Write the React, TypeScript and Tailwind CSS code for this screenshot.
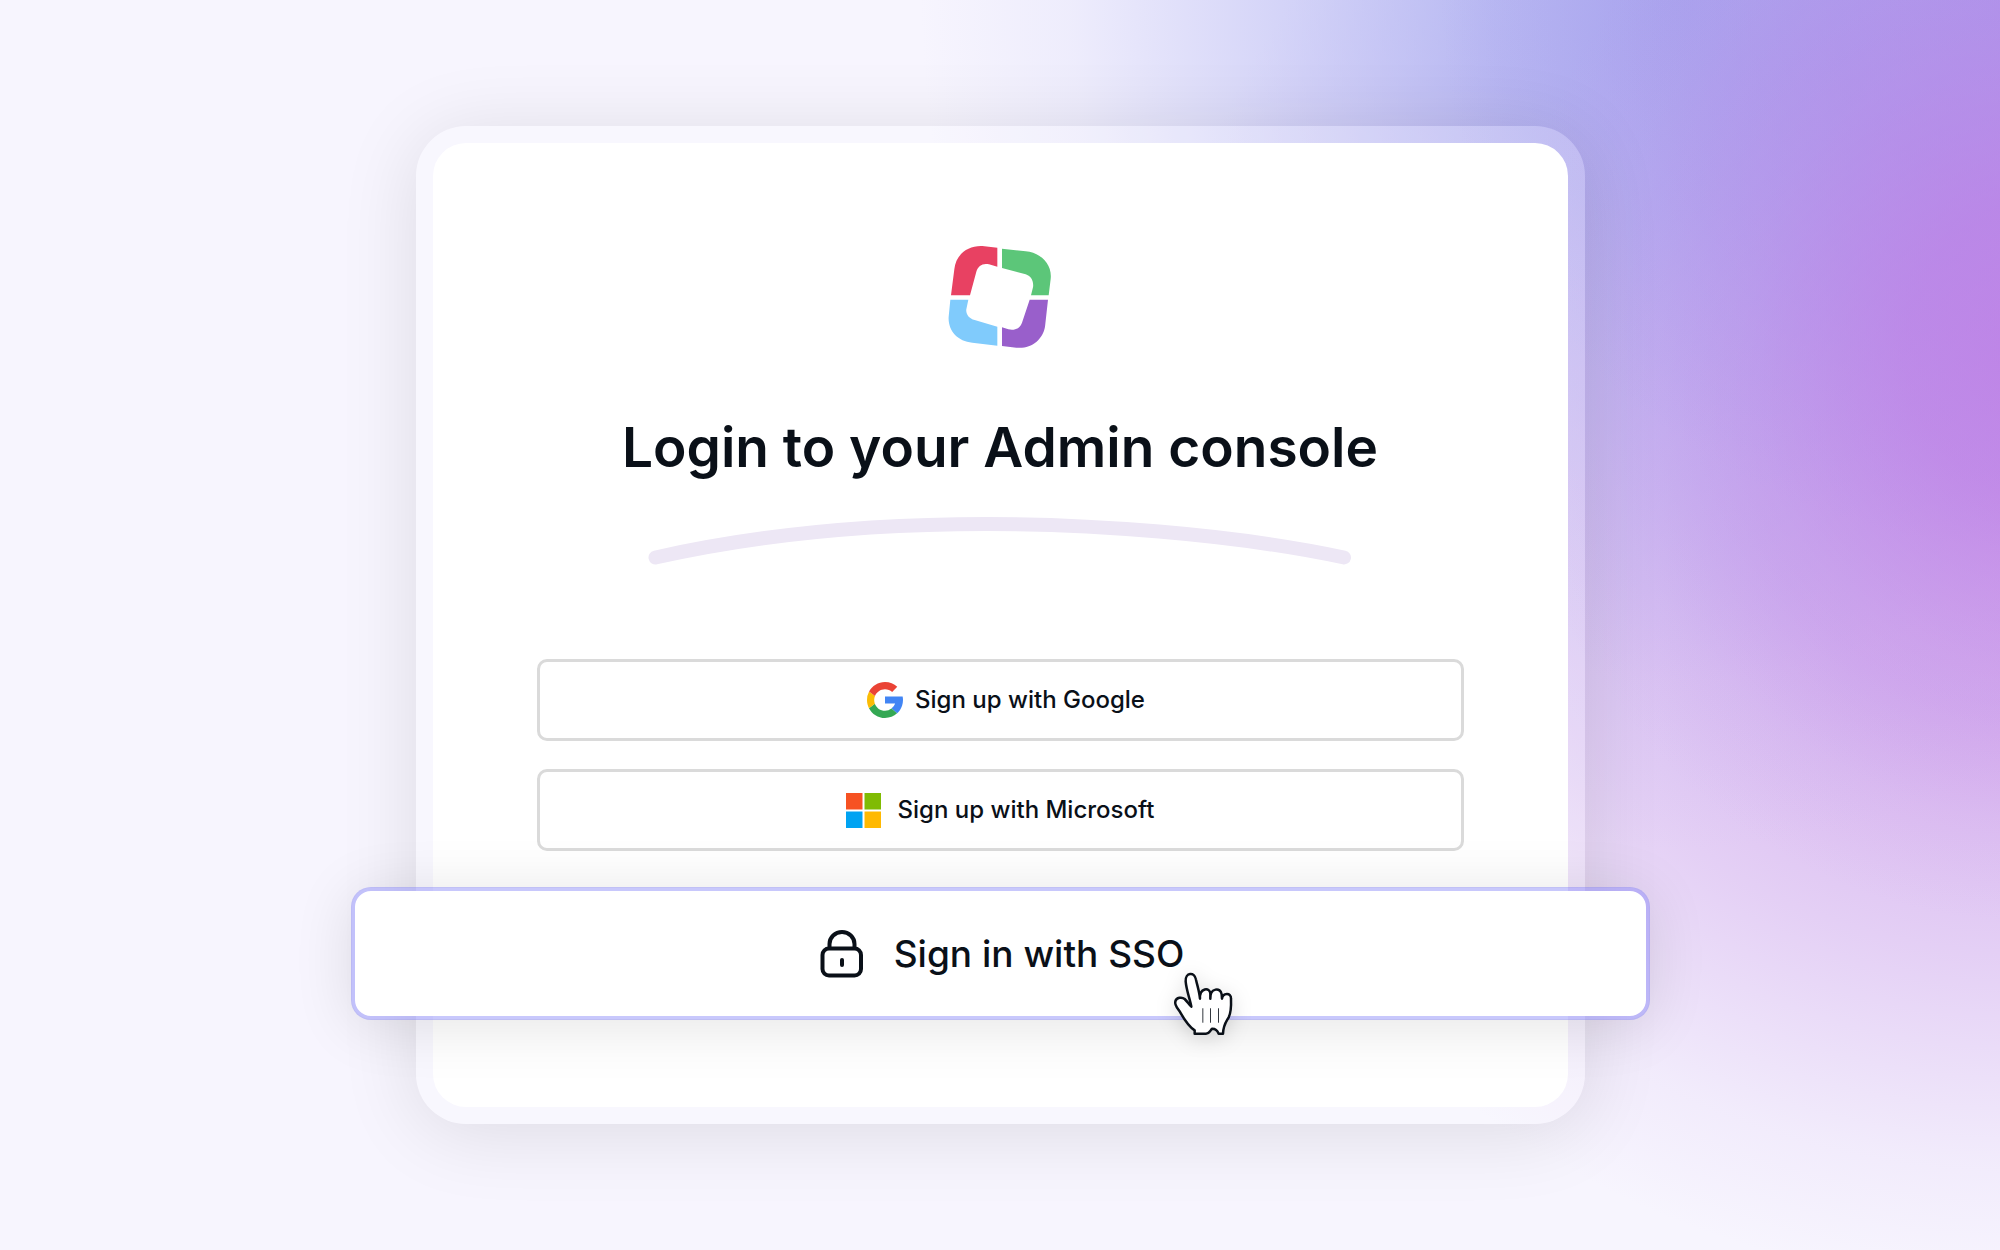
function Logo() {
  return (
    <svg viewBox="57 45 312 312" className="size-[104px]" role="img" aria-label="Company logo">
      <path fill="#e84162" d="M205 53 160 48C115 46 80 75 76 118L66 195.500H123L142 125C147 107 162 98 180 103L205 110Z" />
      <path fill="#5cc679" d="M219 56 290 64C338 69 370 104 365 147L359 195.500H306L312 172C315 152 305 138 290 133L219 114Z" />
      <path fill="#995fcb" d="M302 209.500H357L348 290C341 330 305 358 262 353L219 348V292L238 298C257 303 273 295 279 278Z" />
      <path fill="#80cbfc" d="M64 209.500H118L112 238C110 252 120 266 137 270L205 290V347L130 338C85 335 56 300 59 260Z" />
    </svg>
  );
}

function GoogleIcon() {
  return (
    <svg viewBox="4 4 40 40" className="ml-3 size-9" aria-hidden="true">
      <path fill="#4285f4" d="M43.611 20.083H24v7.917h11.303a12 12 0 0 1-4.087 5.571l6.190 5.238C36.971 39.205 44 34 44 24c0-1.341-.138-2.650-.389-3.917z" />
      <path fill="#34a853" d="M24 44c5.166 0 9.860-1.977 13.409-5.192l-6.190-5.238A11.900 11.900 0 0 1 24 36c-5.202 0-9.619-3.317-11.283-7.946l-6.522 5.025C9.505 39.556 16.227 44 24 44z" />
      <path fill="#fbbc05" d="M6.306 14.691A19.900 19.900 0 0 0 4 24c0 3.260.790 6.340 2.195 9.079l6.522-5.025A12 12 0 0 1 12.877 19.510z" />
      <path fill="#ea4335" d="m6.306 14.691 6.571 4.819C14.655 15.108 18.961 12 24 12c3.059 0 5.842 1.154 7.961 3.039l5.657-5.657C34.046 6.053 29.268 4 24 4 16.318 4 9.656 8.337 6.306 14.691z" />
    </svg>
  );
}

function MicrosoftIcon() {
  return (
    <svg viewBox="0 0 35 35" className="size-[35px]" aria-hidden="true">
      <path fill="#f65222" d="M0 0h16.500v16.500H0z" />
      <path fill="#80bb03" d="M18.500 0H35v16.500H18.500z" />
      <path fill="#00a3f2" d="M0 18.500h16.500V35H0z" />
      <path fill="#ffb902" d="M18.500 18.500H35V35H18.500z" />
    </svg>
  );
}

function LockIcon() {
  return (
    <svg viewBox="0 0 44 48" className="h-12 w-11" fill="none" stroke="#0a1018" strokeWidth="4" strokeLinecap="round" aria-hidden="true">
      <path d="M9.500 18v-4a12.500 12 0 0 1 25 0v4" />
      <rect x="2.500" y="18.500" width="38.500" height="27" rx="6.500" />
      <path d="M22 30v5" />
    </svg>
  );
}

function HandCursor() {
  return (
    <svg
      viewBox="69 65 183 192"
      className="absolute top-[38px] -right-[50px] h-16 w-[61px] overflow-visible drop-shadow-[0_4px_10px_rgba(0,0,0,0.14)]"
      strokeLinejoin="round"
      strokeLinecap="round"
      aria-hidden="true"
    >
      <path
        fill="#fff"
        stroke="#0a1018"
        strokeWidth="7.500"
        d="M124 169C120 147 109 119 107 93C105 66 134 63 138 88C143 110 148 124 150 145C148 112 180 110 181 130V145C179 112 213 110 215 132L216 145C218 127 244 126 243 145C244 171 243 187 236 201C229 214 220 223 219 250H206C202 240 193 235 187 235C181 238 180 250 168 250H134V240C112 226 100 202 89 183C81 172 73 164 76 153C79 141 96 139 104 146C113 155 117 163 124 169Z"
      />
      <path stroke="#0a1018" strokeWidth="2.500" d="M158.500 175v41M181.500 175v41M205.500 175v41" />
    </svg>
  );
}

const providerButton =
  "flex h-[82px] w-full items-center justify-center rounded-[10px] border-3 border-[#dadada] bg-white text-2xl font-medium";

export default function App() {
  return (
    <main className="flex min-h-screen items-center justify-center overflow-hidden bg-[#f7f5fe] bg-[radial-gradient(ellipse_27%_46%_at_102%_28%,rgba(191,124,229,0.8)_0%,rgba(191,124,229,0.66)_25%,rgba(194,130,230,0.33)_55%,rgba(198,145,232,0.1)_82%,rgba(198,145,232,0)_100%),radial-gradient(ellipse_30%_44%_at_102%_0%,rgba(166,146,234,0.9)_0%,rgba(166,146,234,0.65)_35%,rgba(168,150,236,0.22)_75%,rgba(168,150,236,0)_100%),radial-gradient(ellipse_38%_68%_at_84%_0%,rgba(160,164,238,0.86)_0%,rgba(164,168,239,0.73)_25%,rgba(172,174,241,0.47)_52%,rgba(185,187,243,0.15)_80%,rgba(185,187,243,0)_100%),radial-gradient(ellipse_44%_66%_at_101%_37%,rgba(196,140,230,0.74)_0%,rgba(196,142,230,0.65)_30%,rgba(200,152,232,0.4)_60%,rgba(205,170,236,0.13)_85%,rgba(205,170,236,0)_100%)] px-24 py-[126px] font-['Inter',sans-serif] text-[#0a1018]">
      <section className="w-full max-w-[1169px] rounded-[50px] bg-white/20 p-[17px] shadow-[0_8px_80px_rgba(0,0,0,0.11)]">
        <div className="flex flex-col items-center rounded-[33px] bg-white px-[104px] pt-[102px] pb-[87px]">
          <Logo />
          <h1 className="mt-[66px] text-center text-[55px] leading-[64px] font-semibold whitespace-nowrap">
            Login to your Admin console
          </h1>
          <svg viewBox="649 516 704 50" className="mt-[37px] h-[50px] w-[704px]" fill="none" aria-hidden="true">
            <path
              stroke="#ede7f5"
              strokeWidth="14"
              strokeLinecap="round"
              d="M656.500 557.500C770 532 890 524 988 524S1230 533 1345 557.500"
            />
          </svg>
          <div className="mt-[93px] flex w-full flex-col gap-7">
            <button type="button" className={providerButton + " gap-3"}>
              <GoogleIcon />
              Sign up with Google
            </button>
            <button type="button" className={providerButton + " gap-[17px]"}>
              <MicrosoftIcon />
              Sign up with Microsoft
            </button>
          </div>
          <div className="mt-9 -mx-[186px] self-stretch">
            <button
              type="button"
              className="flex h-[133px] w-full items-center justify-center gap-[30px] rounded-[20px] border-4 border-[rgba(118,118,248,0.4)] bg-white bg-clip-padding pl-1 text-[37px] font-medium shadow-[0_6px_60px_rgba(0,0,0,0.11)]"
            >
              <LockIcon />
              <span className="relative leading-10">
                Sign in with SSO
                <HandCursor />
              </span>
            </button>
          </div>
        </div>
      </section>
    </main>
  );
}
